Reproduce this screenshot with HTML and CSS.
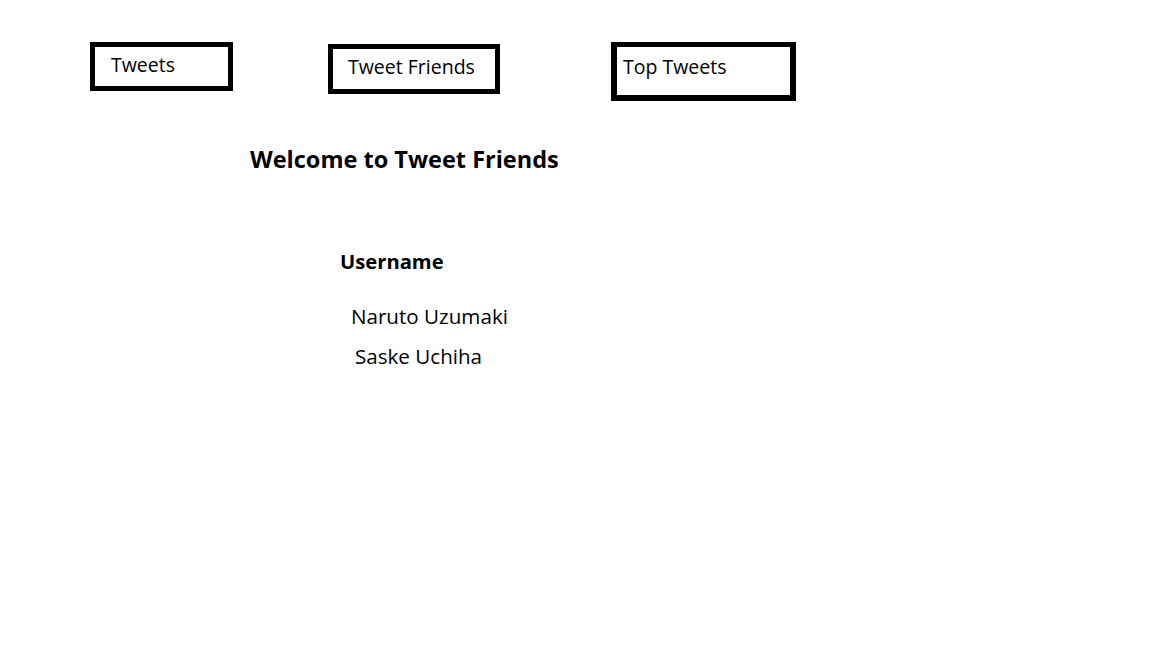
FILE: index.html
```html
<!DOCTYPE html>
<html lang="en">
<head>
<meta charset="utf-8">
<title>Tweet Friends</title>
<link rel="stylesheet" href="styles.css">
</head>
<body>
<nav class="nav">
  <a class="tab tab-tweets" href="#">Tweets</a>
  <a class="tab tab-friends" href="#">Tweet Friends</a>
  <a class="tab tab-top" href="#">Top Tweets</a>
</nav>
<main class="main">
  <h1 class="title">Welcome to Tweet Friends</h1>
  <section class="users">
    <h2 class="users-head">Username</h2>
    <ul class="user-list">
      <li class="user user-1">Naruto Uzumaki</li>
      <li class="user user-2">Saske Uchiha</li>
    </ul>
  </section>
</main>
</body>
</html>
```
FILE: styles.css
```css
html, body {
  margin: 0;
  padding: 0;
  background: #fff;
}
body {
  font-family: "Open Sans", "Noto Sans", sans-serif;
  color: #000;
  width: 1152px;
  height: 648px;
  overflow: hidden;
}
.nav {
  display: flex;
  align-items: flex-start;
  padding: 42px 0 0 90px;
}
.tab {
  display: block;
  box-sizing: border-box;
  border: 5px solid #000;
  color: #000;
  text-decoration: none;
  font-size: 19.5px;
  line-height: 1;
  white-space: nowrap;
}
.tab-tweets {
  width: 143px;
  height: 49px;
  padding: 8px 0 0 16px;
}
.tab-friends {
  width: 172px;
  height: 50px;
  margin: 2px 0 0 95px;
  padding: 8px 0 0 15px;
}
.tab-top {
  width: 185px;
  height: 59px;
  margin-left: 111px;
  border-width: 5px 6px 6px 6px;
  padding: 10px 0 0 6px;
}
.main {
  padding-left: 250px;
}
.title {
  margin: 47px 0 0 0;
  font-size: 23.5px;
  font-weight: 700;
  line-height: 1;
}
.users {
  padding-left: 90px;
}
.users-head {
  margin: 79px 0 0 0;
  font-size: 20.2px;
  font-weight: 700;
  line-height: 1;
}
.user-list {
  list-style: none;
  margin: 0;
  padding: 0;
}
.user {
  font-size: 20.6px;
  line-height: 1;
}
.user-1 {
  margin-top: 35px;
  padding-left: 11px;
}
.user-2 {
  margin-top: 20px;
  padding-left: 15px;
}
```
